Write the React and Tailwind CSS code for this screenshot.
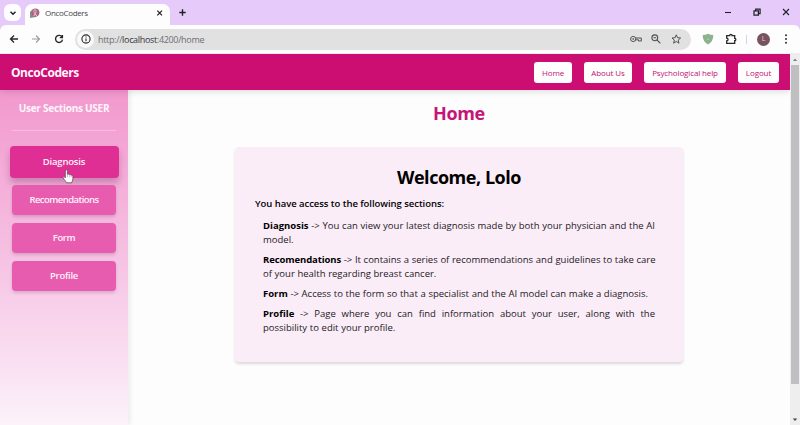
import React from "react";

function Stroke({ children, className = "", w = 1.3, box = "0 0 12 12" }) {
  return (
    <svg viewBox={box} fill="none" stroke="currentColor" strokeWidth={w} className={`block shrink-0 ${className}`}>
      {children}
    </svg>
  );
}

function TabStrip() {
  return (
    <div className="flex h-[25px] items-start bg-[#e6cbfa] text-[#202124]">
      <div className="mt-1 ml-1 flex h-[17px] w-[17px] items-center justify-center rounded-[6px] bg-[#fdfcfe]">
        <Stroke className="h-3 w-3" w={1.5}><path d="M3.5 4.8 6 7.2 8.5 4.8" /></Stroke>
      </div>
      <div className="mt-1 ml-1 flex h-[21px] w-[145px] items-center rounded-t-[7px] bg-[#fdfdfd] pr-[1px] pl-1">
        <svg viewBox="0 0 10 10" className="mt-[-3px] ml-px h-[10px] w-[10px] shrink-0">
          <path d="M0 10V4a4 4 0 1 1 6 5z" fill="#8d8791" />
          <circle cx="5.4" cy="4.6" r="4" fill="#a9647f" />
          <path d="M3.8 8 5.8 4.500C6.600 3 5.800 1.600 5 1.600S3.400 3 4.200 4.500L6.800 8" fill="none" stroke="#f0c4d4" strokeWidth="1" />
        </svg>
        <span className="mt-[-3px] ml-[5px] flex-1 whitespace-nowrap text-[8px] tracking-[-0.33px] text-[#45464a]">OncoCoders</span>
        <Stroke className="mt-[-3px] mr-1 h-[10px] w-[10px]" w={1.5}><path d="m2.800 3.200 5.600 5.600M8.400 3.200 2.800 8.800" /></Stroke>
      </div>
      <Stroke className="mt-[6px] ml-[6px] h-3 w-3" w={1.4}><path d="M6.500 3.300v6.400M3.300 6.500h6.400" /></Stroke>
      <div className="mt-[6px] mr-2 ml-auto flex gap-[17px]">
        <Stroke className="h-3 w-3" w={1.1}><path d="M3 6.5h6" /></Stroke>
        <Stroke className="h-3 w-3" w={1.2}><path d="M3 4.8h4.4v4.4H3zM4.700 4.500V3.100h4.400v4.500H7.800" /></Stroke>
        <Stroke className="h-3 w-3" w={1.1}><path d="m3 3 6 6M9 3 3 9" /></Stroke>
      </div>
    </div>
  );
}

function Toolbar() {
  return (
    <div className="bg-[#e6cbfa]">
      <div className="flex h-[29px] items-center rounded-t-[6px] border-b border-[#eeeeef] bg-[#fdfdfd] pl-2 text-[#26272a]">
        <Stroke className="h-3 w-3"><path d="M10 6H2.500M6 2.500 2.500 6 6 9.500" /></Stroke>
        <Stroke className="ml-[10px] h-3 w-3 text-[#9a9b9e]" w={1.1}><path d="M2 6h7.500M6 2.500 9.500 6 6 9.500" /></Stroke>
        <Stroke className="ml-[11px] h-3 w-3" w={1.4}><path d="M9 4A3.500 3.500 0 1 0 9.500 6.600M9.400 2v2.600H6.800" /></Stroke>
        <div className="ml-[10px] flex h-[21px] w-[616px] items-center rounded-full bg-[#e1e1e2] pl-[2px]">
          <div className="flex h-[17px] w-[17px] items-center justify-center rounded-full bg-[#fafafa]">
            <Stroke className="h-3 w-3" w={1.1}><circle cx="6" cy="6" r="4.1" /><path d="M6 5.400v2.800M6 3.500v1.100" /></Stroke>
          </div>
          <span className="mt-px ml-1 whitespace-nowrap text-[9px] tracking-[-0.33px] text-[#6d6e72]">
            http://<span className="text-[#353639]">localhost</span>:4200/home
          </span>
          <div className="mr-[9px] ml-auto flex items-center gap-[8px] text-[#515256]">
            <Stroke className="h-3 w-3" w={1}><circle cx="3.200" cy="6" r="2.600" /><circle cx="3.200" cy="6" r=".5" /><path d="M5.800 5h5.500v3H8.500V6.800H5.800" /></Stroke>
            <Stroke className="h-3 w-3" w={1.1}><circle cx="4.800" cy="4.800" r="2.900" /><path d="m7 7 3.400 3.400M3.500 4.800h2.600" /></Stroke>
            <Stroke className="h-3 w-3" w={1}><path d="m6.300 1.800 1.200 2.900 3.100.3-2.400 2.100.8 3.100-2.700-1.700-2.700 1.700.8-3.100L2 5l3.100-.3z" /></Stroke>
          </div>
        </div>
        <svg viewBox="0 0 12 12" className="ml-[11px] h-3 w-3 shrink-0"><path d="M.8 2.100Q3.500 2 6 .8q2.500 1.200 5.200 1.300Q11.600 8.500 6 11.500.4 8.500.8 2.100z" fill="#8eb28e" /><path d="M5.500 6.300h1" stroke="#deeade" /></svg>
        <Stroke className="ml-[11px] h-3 w-3" w={1.3}><path d="M1.700 2.600h3c0-1.600 2.400-1.600 2.400 0h2.600v2.700c1.500 0 1.500 2.400 0 2.400v2.700h-8V7.900c1.800 0 1.800-2.700 0-2.700z" /></Stroke>
        <span className="ml-[9px] h-[9px] w-px bg-[#e3c9f4]" />
        <span className="ml-[10px] flex h-[13px] w-[13px] items-center justify-center rounded-full bg-[#795260] text-[7px] text-[#e5cbd4]">L</span>
        <svg viewBox="0 0 12 12" className="ml-[10px] h-3 w-3 shrink-0" fill="#303134"><circle cx="6" cy="2.200" r="1" /><circle cx="6" cy="6" r="1" /><circle cx="6" cy="9.800" r="1" /></svg>
      </div>
    </div>
  );
}

function NavButton({ children, className }) {
  return (
    <button className={`h-[21px] shrink-0 whitespace-nowrap rounded-[3px] bg-[#fefefe] text-[8px] leading-[21px] text-[#c31273] ${className}`}>{children}</button>
  );
}

function SideButton({ children, active = false, className = "" }) {
  const look = active
    ? "-mx-[2.500px] h-8 bg-[#df2e94] shadow-[0_5px_7px_rgba(90,20,70,0.28)]"
    : "h-[30px] bg-[#e85cb0] shadow-[0_2px_3px_rgba(90,20,70,0.18)]";
  return (
    <button className={`flex shrink-0 items-center justify-center rounded-[4px] pt-px font-semibold text-[#fff3fa] ${look} ${className}`}>{children}</button>
  );
}

function Sidebar() {
  return (
    <aside className="relative flex w-32 shrink-0 flex-col bg-linear-to-b from-[#f298ce] via-[#f5bde1] via-45% to-[#fbf2fa] px-3 shadow-[2px_0_5px_rgba(0,0,0,0.08)]">
      <h2 className="mt-[11px] text-center text-[10px] leading-[14px] font-bold tracking-[-0.25px] whitespace-nowrap text-[#fff5fb]">User Sections USER</h2>
      <div className="mt-[15px] h-px shrink-0 bg-[#f5bfe0]" />
      <SideButton active className="mt-[15px] text-[9.500px] tracking-[-0.2px]">Diagnosis</SideButton>
      <SideButton className="mt-[7px] text-[9.500px] tracking-[-0.55px]">Recomendations</SideButton>
      <SideButton className="mt-2 text-[9.500px] tracking-[-0.4px]">Form</SideButton>
      <SideButton className="mt-2 text-[9.500px] tracking-[-0.3px]">Profile</SideButton>
      <svg viewBox="0 0 12 15" className="absolute top-[79px] left-[62px] h-[15px] w-3">
        <path d="M3.300 8.800V2c0-1.700 2.100-1.700 2.100 0v3.300c.7-.5 1.700-.3 2 .4.700-.4 1.500-.1 1.800.5.900-.2 1.700.3 1.700 1.300v2.300c0 1.500-.8 2.200-1.200 4H4.500C4 12.200 2.200 10.800 1.200 9c-.6-1.200.7-1.900 1.400-1z" fill="#fff" stroke="#65475b" strokeWidth=".8" strokeLinejoin="round" />
        <path d="M5.400 5.300v3M7.400 5.800v2.500M9.200 6.300v2" stroke="#a7929f" strokeWidth=".6" />
      </svg>
    </aside>
  );
}

function Line({ children, fill = true }) {
  return <span className={`block whitespace-nowrap ${fill ? "[text-align-last:justify]" : "[text-align-last:left]"}`}>{children}</span>;
}

function Main() {
  return (
    <main className="flex flex-1 flex-col bg-[#fdfdfd] px-[107px]">
      <h1 className="mt-[11px] text-center text-[18px] leading-6 font-bold tracking-[-0.35px] text-[#c51577]">Home</h1>
      <section className="mt-[22px] h-[215px] w-[448px] rounded-[4px] bg-[#fbedf8] px-5 pt-[18px] text-black shadow-[0_2px_3px_rgba(0,0,0,0.14)]">
        <h2 className="text-center text-[18px] leading-6 font-bold tracking-[-0.46px]">Welcome, Lolo</h2>
        <p className="mt-[8px] text-[9.500px] leading-[14px] font-semibold tracking-[-0.05px] whitespace-nowrap">You have access to the following sections:</p>
        <div className="mt-2 ml-2 flex w-[392px] flex-col gap-[6px] text-[9.500px] leading-[14px] [word-spacing:0.2px] text-[#222024]">
          <p>
            <Line><b className="text-black">Diagnosis</b> -&gt; You can view your latest diagnosis made by both your physician and the AI</Line>
            <Line fill={false}>model.</Line>
          </p>
          <p>
            <Line><b className="tracking-[-0.1px] text-black">Recomendations</b> -&gt; It contains a series of recommendations and guidelines to take care</Line>
            <Line fill={false}>of your health regarding breast cancer.</Line>
          </p>
          <p><Line fill={false}><b className="text-black">Form</b> -&gt; Access to the form so that a specialist and the AI model can make a diagnosis.</Line></p>
          <p>
            <Line><b className="text-black">Profile</b> -&gt; Page where you can find information about your user, along with the</Line>
            <Line fill={false}>possibility to edit your profile.</Line>
          </p>
        </div>
      </section>
    </main>
  );
}

function ScrollBar() {
  return (
    <div className="flex w-[10px] shrink-0 flex-col items-center bg-[#eeeeef]">
      <svg viewBox="0 0 10 11" className="h-[11px] w-[10px]"><path d="M2.800 7 5 4.500 7.200 7z" fill="#858587" /></svg>
      <div className="h-[319px] w-[8px] bg-[#bfbfc1]" />
      <svg viewBox="0 0 10 10" className="mt-auto mb-0 h-[10px] w-[10px]"><path d="M2.800 3.500 5 6l2.200-2.500z" fill="#444" /></svg>
    </div>
  );
}

export default function App() {
  return (
    <div className="flex h-[425px] w-[800px] flex-col overflow-hidden font-['Open_Sans','Noto_Sans',sans-serif]">
      <TabStrip />
      <Toolbar />
      <div className="flex min-h-0 flex-1">
        <div className="flex flex-1 flex-col overflow-hidden">
          <header className="relative z-10 flex h-[36px] shrink-0 items-center bg-[#cc0d72] pt-px pr-[11px] pl-[11px] shadow-[0_2px_6px_rgba(0,0,0,0.12)]">
            <span className="mt-px mr-auto text-[12px] font-bold tracking-[-0.45px] text-[#fff5fa]">OncoCoders</span>
            <nav className="flex">
              <NavButton className="mr-3 w-[38px] tracking-[-0.1px]">Home</NavButton>
              <NavButton className="mr-3 w-[48px] tracking-[-0.1px]">About Us</NavButton>
              <NavButton className="mr-3 w-[82px] tracking-[-0.13px]">Psychological help</NavButton>
              <NavButton className="w-[41px] tracking-[-0.1px]">Logout</NavButton>
            </nav>
          </header>
          <div className="flex min-h-0 flex-1">
            <Sidebar />
            <Main />
          </div>
        </div>
        <ScrollBar />
      </div>
    </div>
  );
}
